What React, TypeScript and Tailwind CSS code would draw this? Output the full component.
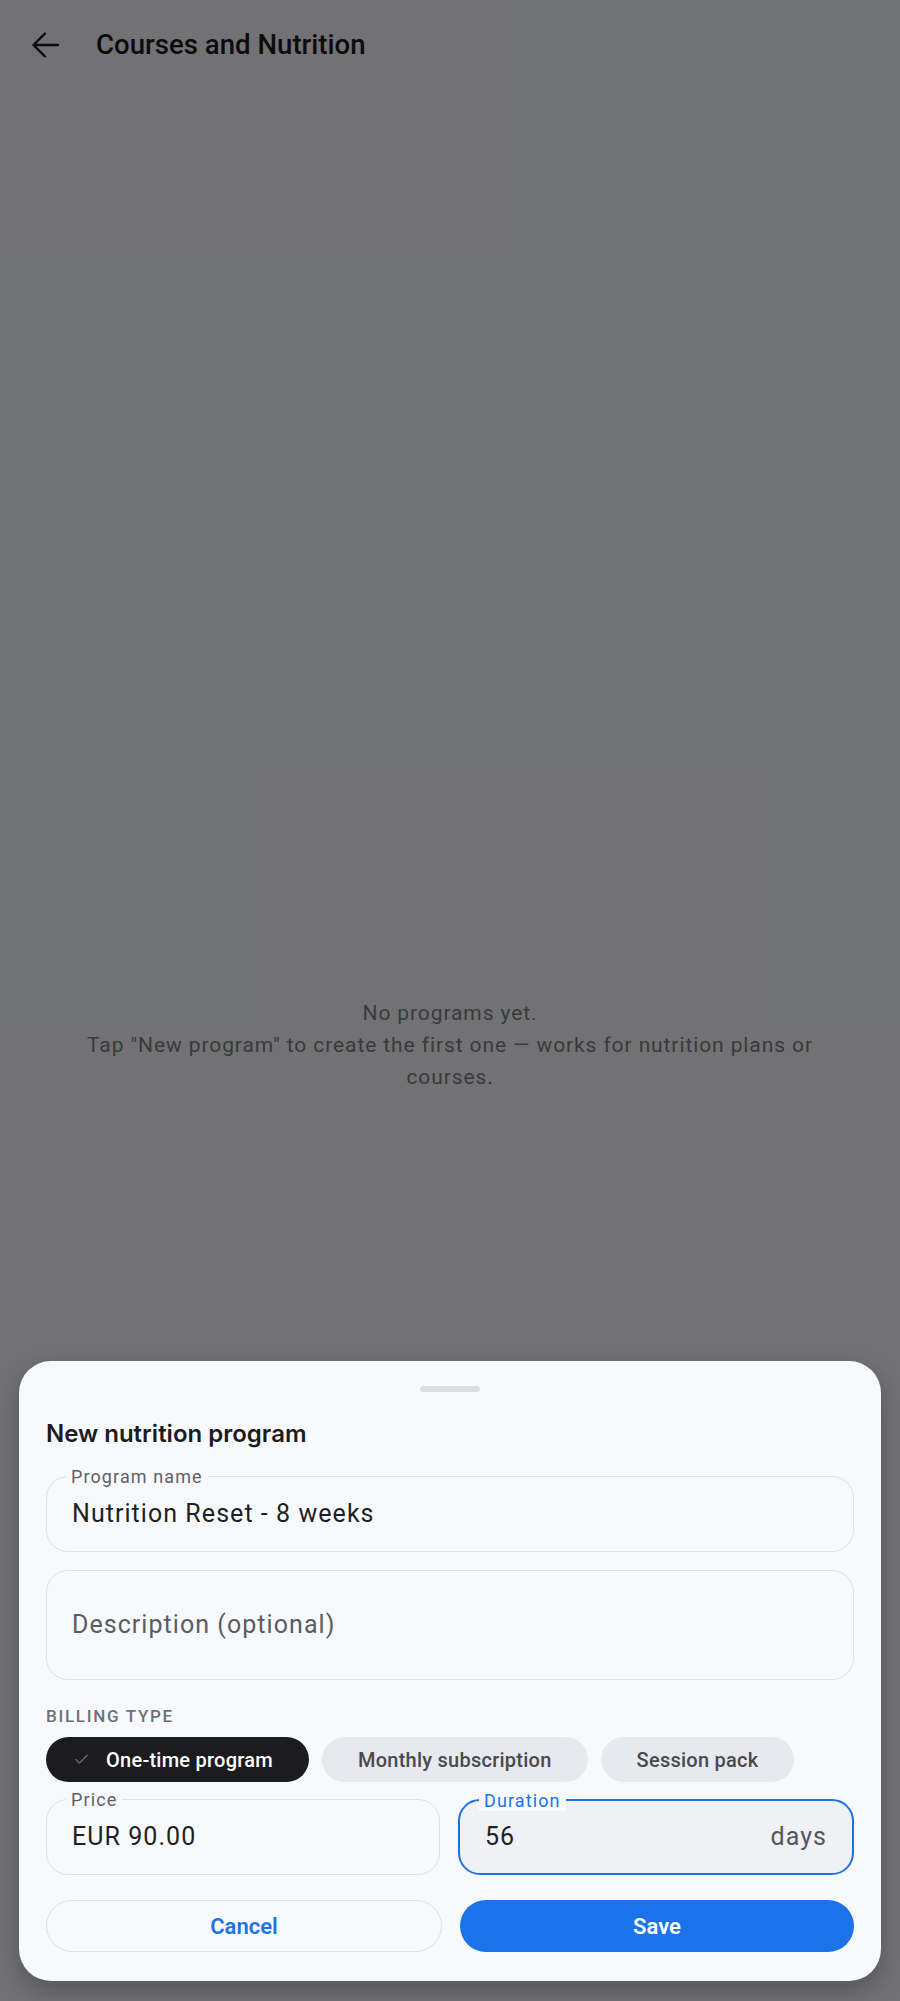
import { Check } from "lucide-react";

function Field({
  label,
  value,
  suffix,
  focused = false,
}: {
  label: string;
  value: string;
  suffix?: string;
  focused?: boolean;
}) {
  return (
    <div
      className={
        focused
          ? "relative flex h-[76px] flex-1 items-center rounded-[22px] border-2 border-[#1b73e6] bg-[#f0f1f4] pl-[25px] pr-[25px]"
          : "relative flex h-[76px] flex-1 items-center rounded-[22px] border-[1.5px] border-[#dfe1e6] pl-[25px] pr-[25px]"
      }
    >
      <span
        className={
          focused
            ? "absolute left-[19px] top-0 -translate-y-1/2 bg-[#f8f9fd] px-[5px] text-[18px] leading-[20px] tracking-[1.1px] text-[#1b73e6]"
            : "absolute left-[19px] top-0 -translate-y-1/2 bg-[#f8f9fd] px-[5px] text-[18px] leading-[20px] tracking-[1.1px] text-[#5f6166]"
        }
      >
        {label}
      </span>
      <span className="flex-1 text-[25px] tracking-[1.05px] text-[#1f1f23]">{value}</span>
      {suffix && <span className="text-[25px] tracking-[1.05px] text-[#55575c]">{suffix}</span>}
    </div>
  );
}

export default function App() {
  return (
    <div className="relative flex h-[2001px] w-full flex-col overflow-hidden bg-[#f8f9fc] font-['Roboto',sans-serif]">
      {/* App bar */}
      <header className="flex h-[90px] items-center pl-[31px]">
        <svg width="28" height="28" viewBox="0 0 28 28" fill="none" stroke="#1a1a1e" strokeWidth="2.4" strokeLinecap="round" strokeLinejoin="round">
          <path d="M27 14H2.5M14 2.5 2.5 14 14 25.5" />
        </svg>
        <h1 className="ml-[37px] text-[27.6px] font-medium leading-[28px] text-[#1a1a1e]">Courses and Nutrition</h1>
      </header>

      {/* Empty state */}
      <main className="flex flex-1 items-center justify-center px-[50px] pb-[2px]">
        <p className="text-center text-[21px] leading-[32px] tracking-[0.9px] text-[#7d7e85]">
          No programs yet.
          <br />
          Tap "New program" to create the first one — works for nutrition plans or courses.
        </p>
      </main>

      {/* Scrim */}
      <div className="absolute inset-0 bg-black/[0.54]" />

      {/* Bottom sheet */}
      <div className="absolute bottom-[20px] left-[19px] right-[19px] rounded-[32px] bg-[#f8f9fd] px-[27px] pb-[29px] pt-[25px] shadow-[0_10px_24px_rgba(0,0,0,0.25)]">
        <div className="mx-auto h-[6px] w-[60px] rounded-full bg-[#dcdde3]" />

        <h2 className="mt-[26px] font-['Inter',sans-serif] text-[24px] font-semibold leading-[32px] text-[#1c1c1f]">
          New nutrition program
        </h2>

        <div className="mt-[26px] flex">
          <Field label="Program name" value="Nutrition Reset - 8 weeks" />
        </div>

        <div className="mt-[18px] flex h-[110px] items-center rounded-[22px] border-[1.5px] border-[#dfe1e6] px-[25px]">
          <span className="text-[25px] tracking-[1.05px] text-[#5a5c62]">Description (optional)</span>
        </div>

        <div className="mt-[26px] text-[17px] font-medium leading-[20px] tracking-[1.7px] text-[#6d7078]">BILLING TYPE</div>

        <div className="mt-[11px] flex gap-[13px]">
          <button className="flex h-[45px] items-center gap-[16px] rounded-full bg-[#1c1c1e] pl-[27px] pr-[36px] text-[20px] font-medium tracking-[0.25px] text-white">
            <Check size={17} strokeWidth={1.6} className="text-[#6e7385]" />
            One-time program
          </button>
          <button className="flex h-[45px] items-center rounded-full bg-[#e8e9ee] px-[36px] text-[20px] font-medium tracking-[0.25px] text-[#48494e]">
            Monthly subscription
          </button>
          <button className="flex h-[45px] items-center rounded-full bg-[#e8e9ee] px-[36px] text-[20px] font-medium tracking-[0.25px] text-[#48494e]">
            Session pack
          </button>
        </div>

        <div className="mt-[17px] flex gap-[18px]">
          <Field label="Price" value="EUR 90.00" />
          <Field label="Duration" value="56" suffix="days" focused />
        </div>

        <div className="mt-[25px] flex gap-[18px]">
          <button className="h-[52px] flex-1 rounded-full border-[1.5px] border-[#dfe1e6] text-[22px] font-semibold text-[#1b73e6]">
            Cancel
          </button>
          <button className="h-[52px] flex-1 rounded-full bg-[#1a73e8] text-[22px] font-semibold text-white">Save</button>
        </div>
      </div>
    </div>
  );
}
